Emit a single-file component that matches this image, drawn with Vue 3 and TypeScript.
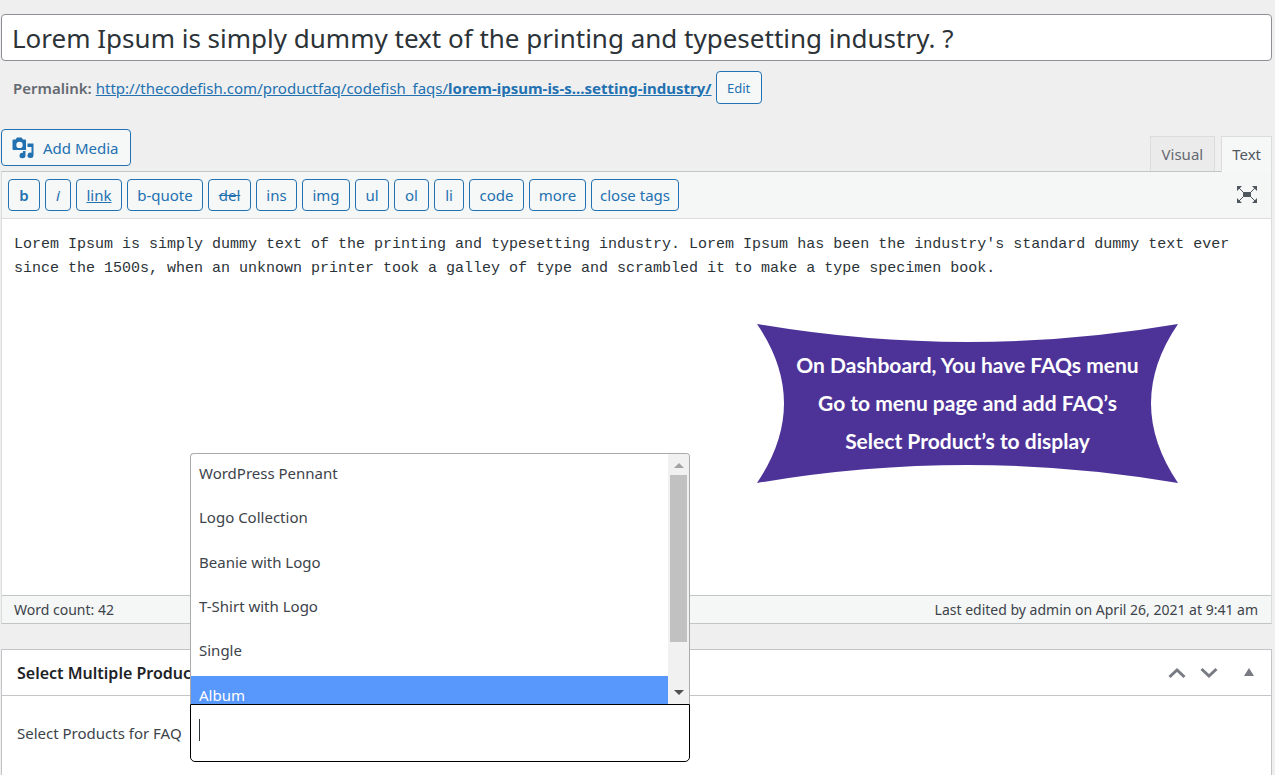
<script setup lang="ts">
import { ref } from 'vue'

interface Tag {
  label: string
  kind?: 'bold' | 'italic' | 'link' | 'del'
}

const title = ref('Lorem Ipsum is simply dummy text of the printing and typesetting industry. ?')
const body = ref(
  "Lorem Ipsum is simply dummy text of the printing and typesetting industry. Lorem Ipsum has been the industry's standard dummy text ever since the 1500s, when an unknown printer took a galley of type and scrambled it to make a type specimen book."
)
const search = ref('')

const tags: Tag[] = [
  { label: 'b', kind: 'bold' },
  { label: 'i', kind: 'italic' },
  { label: 'link', kind: 'link' },
  { label: 'b-quote' },
  { label: 'del', kind: 'del' },
  { label: 'ins' },
  { label: 'img' },
  { label: 'ul' },
  { label: 'ol' },
  { label: 'li' },
  { label: 'code' },
  { label: 'more' },
  { label: 'close tags' },
]

const products = ['WordPress Pennant', 'Logo Collection', 'Beanie with Logo', 'T-Shirt with Logo', 'Single', 'Album']
const highlighted = ref('Album')
</script>

<template>
  <main class="page">
    <input v-model="title" class="title" type="text" aria-label="Title" />

    <div class="permalink">
      <strong>Permalink:</strong>
      <a href="#">http://thecodefish.com/productfaq/codefish_faqs/<b>lorem-ipsum-is-s…setting-industry/</b></a>
      <button type="button" class="btn edit">Edit</button>
    </div>

    <div class="editor-tools">
      <button type="button" class="btn media">
        <svg width="22" height="22" viewBox="0 0 22 22" aria-hidden="true">
          <path
            fill="currentColor"
            fill-rule="evenodd"
            d="M5 .5h4.500l1.500 2H13Q14 2.500 14 3.500V13H1.500Q.5 13 .5 12V3.500Q.5 2.500 1.500 2.500H3.500ZM7.500 4.700a3.200 3.200 0 1 0 0 6.400 3.200 3.200 0 0 0 0-6.400Z"
          />
          <path
            fill="currentColor"
            d="M15.500 6.500h6V18.500a3 2.700 0 1 1-2-2.700V10H15.500ZM11 14h2.500V18.500a3 2.700 0 1 1-2.500-2.700Z"
          />
        </svg>
        Add Media
      </button>
      <div class="tabs">
        <button type="button" class="tab">Visual</button>
        <button type="button" class="tab active">Text</button>
      </div>
    </div>

    <section class="editor">
      <div class="toolbar">
        <div class="tags">
          <button v-for="tag in tags" :key="tag.label" type="button" class="btn tag" :class="tag.kind">{{ tag.label }}</button>
        </div>
        <button type="button" class="fullscreen" aria-label="Distraction-free writing mode">
          <svg width="22" height="18" viewBox="0 0 22 18" aria-hidden="true">
            <path fill="currentColor" d="M7 6h8v5H7ZM1 0h5L1 5ZM21 0v5l-5-5ZM1 17v-5l5 5ZM21 17h-5l5-5Z" />
            <path stroke="currentColor" fill="none" d="M2 1l6 6M20 1l-6 6M2 16l6-6M20 16l-6-6" />
          </svg>
        </button>
      </div>
      <div class="writing">
        <textarea v-model="body" aria-label="Content" spellcheck="false"></textarea>
        <div class="callout">
          <svg viewBox="0 0 421 159" preserveAspectRatio="none" aria-hidden="true">
            <path fill="#4d3398" d="M0 0Q210 36 421 0Q367 79 421 159Q210 123 0 159Q54 79 0 0Z" />
          </svg>
          <p>On Dashboard, You have FAQs menu<br />Go to menu page and add FAQ’s<br />Select Product’s to display</p>
        </div>
      </div>
      <footer class="status">
        <span>Word count: 42</span>
        <span>Last edited by admin on April 26, 2021 at 9:41 am</span>
      </footer>
    </section>

    <section class="metabox">
      <header>
        <h2>Select Multiple Products</h2>
        <div class="handles">
          <button type="button" aria-label="Move up">
            <svg width="18" height="12" viewBox="0 0 18 12"><path d="M1.500 10L9 3l7.500 7" /></svg>
          </button>
          <button type="button" aria-label="Move down">
            <svg width="18" height="12" viewBox="0 0 18 12"><path d="M1.500 2L9 9l7.500-7" /></svg>
          </button>
          <button type="button" aria-label="Toggle panel">
            <svg width="10" height="12" viewBox="0 0 10 12"><path class="solid" d="M5 1l5 8H0Z" /></svg>
          </button>
        </div>
      </header>
      <div class="inside">
        <label for="faq-products">Select Products for FAQ</label>
        <div class="picker">
          <div class="dropdown">
            <ul role="listbox" aria-label="Products">
              <li
                v-for="product in products"
                :key="product"
                role="option"
                :aria-selected="product === highlighted"
                :class="{ highlighted: product === highlighted }"
              >
                {{ product }}
              </li>
            </ul>
            <div class="scrollbar" aria-hidden="true">
              <i class="up"></i>
              <i class="thumb"></i>
              <i class="down"></i>
            </div>
          </div>
          <input id="faq-products" v-model="search" type="text" />
          <span class="caret"></span>
        </div>
      </div>
    </section>
  </main>
</template>

<style>
body {
  margin: 0;
  background: #fff;
}
</style>

<style scoped>
* {
  box-sizing: border-box;
}
.page {
  padding: 14px 3px 0 1px;
  background: #efefef;
  color: #3c434a;
  font-family: 'Noto Sans', 'Open Sans', sans-serif;
  font-size: 15px;
  line-height: 20px;
}
button,
input {
  font-family: inherit;
  font-size: inherit;
  line-height: inherit;
  color: inherit;
}
.title {
  display: block;
  width: 100%;
  height: 47px;
  padding: 0 10px;
  border: 1px solid #8c8f94;
  border-radius: 4px;
  background: #fff;
  color: #2c3338;
  font-size: 26px;
  outline: none;
}
.permalink {
  display: flex;
  align-items: center;
  gap: 4px;
  margin-top: 10px;
  padding-left: 12px;
  color: #646970;
}
.permalink strong {
  font-weight: 600;
}
.permalink b {
  font-weight: 700;
}
.permalink a {
  color: #2271b1;
}
.btn {
  border: 1px solid #2271b1;
  border-radius: 4px;
  background: #f6f7f7;
  color: #2271b1;
  padding: 0 10px;
  white-space: nowrap;
}
.edit {
  min-width: 46px;
  height: 33px;
  font-size: 13px;
}
.editor-tools {
  display: flex;
  justify-content: space-between;
  margin-top: 25px;
  height: 42px;
}
.media {
  display: flex;
  align-items: center;
  gap: 9px;
  height: 37px;
  padding: 0 11px 0 10px;
}
.tabs {
  display: flex;
  align-items: flex-end;
  gap: 6px;
}
.tab {
  height: 35px;
  padding: 0 11px;
  border: 1px solid #dcdcde;
  border-bottom: 0;
  background: #ebebeb;
  color: #646970;
}
.tab.active {
  position: relative;
  height: 36px;
  margin-bottom: -1px;
  padding: 0 10px 2px;
  background: #f6f7f7;
  color: #50575e;
}
.editor {
  border: 1px solid #dcdcde;
  border-top-color: #c3c4c7;
  border-bottom-color: #c3c4c7;
}
.toolbar {
  display: flex;
  align-items: center;
  height: 47px;
  padding: 0 13px 0 6px;
  border-bottom: 1px solid #dcdcde;
  background: #f5f7f6;
}
.tags {
  display: grid;
  grid-template-columns: 32px 26px 46px 76px 43px 41px 48px 34px 35px 30px 55px 57px 88px;
  gap: 5px;
}
.tag {
  height: 32px;
  padding: 0;
}
.bold {
  font-weight: 600;
}
.italic {
  font-style: italic;
}
.link {
  text-decoration: underline;
}
.del {
  text-decoration: line-through;
}
.fullscreen {
  display: flex;
  margin-left: auto;
  padding: 0;
  border: 0;
  background: none;
  color: #50575e;
}
.writing {
  position: relative;
  background: #fff;
}
textarea {
  display: block;
  width: 100%;
  height: 376px;
  padding: 14px 12px;
  border: 0;
  outline: none;
  resize: none;
  background: #fff;
  color: #2c3338;
  font-family: 'Liberation Mono', monospace;
  font-size: 15px;
  line-height: 24px;
}
.callout {
  position: absolute;
  top: 105px;
  right: 93px;
  width: 421px;
  height: 159px;
  display: grid;
  place-items: center;
}
.callout svg {
  position: absolute;
  inset: 0;
  width: 100%;
  height: 100%;
}
.callout p {
  position: relative;
  margin: 0;
  padding-bottom: 2px;
  color: #fff;
  font-family: Lato, 'Open Sans', sans-serif;
  font-size: 21px;
  font-weight: 700;
  line-height: 38px;
  text-align: center;
  white-space: nowrap;
}
.status {
  display: flex;
  justify-content: space-between;
  align-items: center;
  height: 28px;
  padding: 0 13px 0 12px;
  border-top: 1px solid #c3c4c7;
  background: #f5f7f6;
  font-size: 14px;
}
.metabox {
  margin-top: 25px;
  border: 1px solid #c3c4c7;
  border-bottom: 0;
  background: #fff;
}
.metabox header {
  display: flex;
  justify-content: space-between;
  align-items: center;
  height: 46px;
  padding: 0 17px 0 15px;
  border-bottom: 1px solid #c3c4c7;
}
h2 {
  margin: 0;
  color: #1d2327;
  font-size: 16px;
  font-weight: 600;
}
.handles {
  display: flex;
  align-items: center;
  gap: 14px;
}
.handles button {
  display: flex;
  padding: 0;
  border: 0;
  background: none;
  color: #787c82;
}
.handles button:last-child {
  margin-left: 12px;
}
.handles path {
  fill: none;
  stroke: currentColor;
  stroke-width: 3;
}
.handles .solid {
  fill: currentColor;
  stroke: none;
}
.inside {
  display: grid;
  grid-template-columns: 173px 500px;
  align-items: center;
  padding: 8px 0 13px 15px;
}
.picker {
  position: relative;
}
.picker input {
  display: block;
  width: 100%;
  height: 58px;
  padding: 0 8px;
  border: 1px solid #000;
  border-radius: 0 0 5px 5px;
  background: #fff;
  outline: none;
}
.caret {
  position: absolute;
  left: 9px;
  top: 15px;
  width: 1px;
  height: 22px;
  background: #2c3338;
}
.dropdown {
  position: absolute;
  bottom: 100%;
  left: 0;
  display: flex;
  width: 100%;
  height: 251px;
  overflow: hidden;
  border: 1px solid #aaa;
  border-bottom: 0;
  border-radius: 4px 4px 0 0;
  background: #fff;
}
ul {
  flex: 1;
  display: grid;
  grid-template-rows: repeat(6, 1fr);
  height: 266px;
  margin: 0;
  padding: 0;
  list-style: none;
}
li {
  padding: 9px 8px;
}
li.highlighted {
  background: #5897fb;
  color: #fff;
}
.scrollbar {
  display: flex;
  flex-direction: column;
  align-items: center;
  width: 21px;
  padding: 9px 2px;
  background: #f1f1f1;
}
.up,
.down {
  border: 5px solid transparent;
}
.up {
  border-top: 0;
  border-bottom-color: #a3a3a3;
}
.down {
  margin-top: auto;
  border-bottom: 0;
  border-top-color: #505050;
}
.thumb {
  width: 100%;
  height: 167px;
  margin-top: 7px;
  background: #c1c1c1;
}
</style>
